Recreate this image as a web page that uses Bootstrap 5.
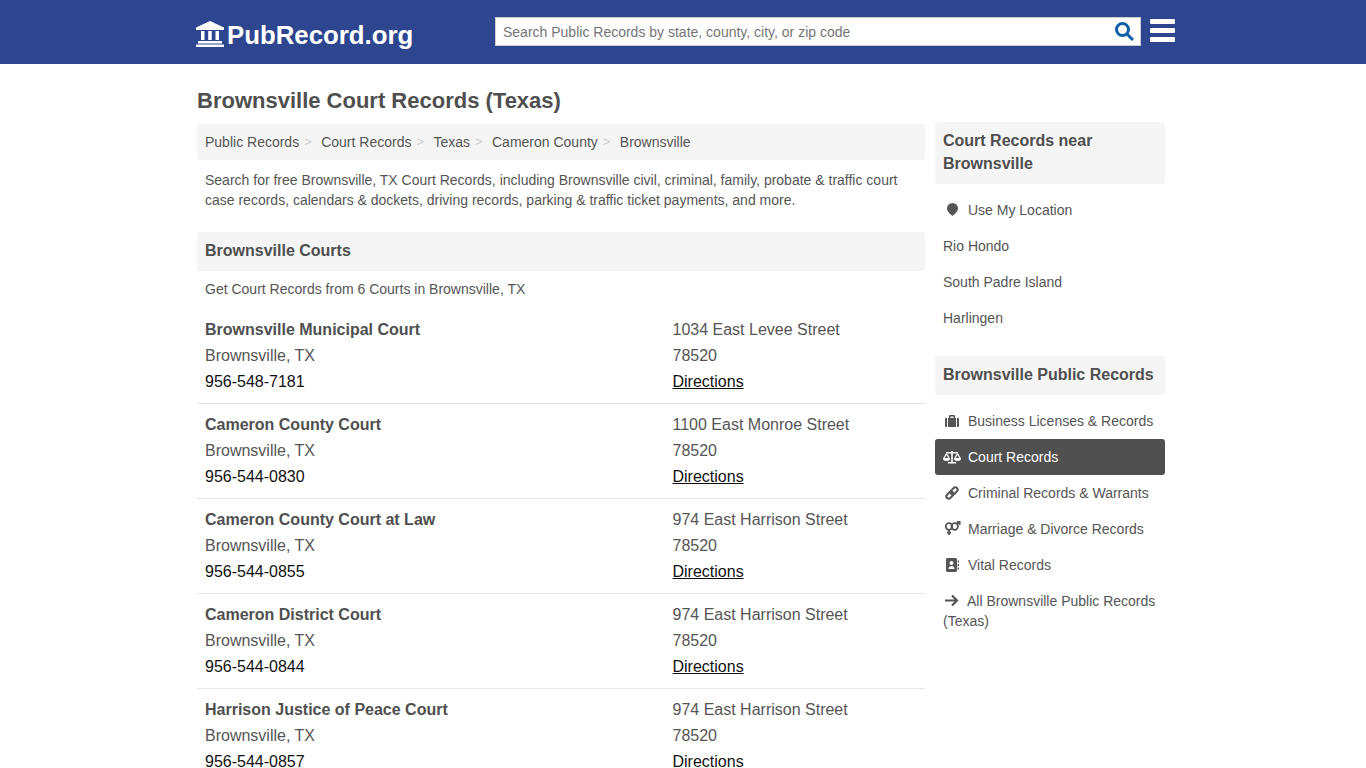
<!DOCTYPE html>
<html lang="en">
<head>
<meta charset="UTF-8">
<meta name="viewport" content="width=device-width, initial-scale=1.0">
<title>Brownsville Court Records (Texas)</title>
<link href="https://cdn.jsdelivr.net/npm/bootstrap@5.3.0/dist/css/bootstrap.min.css" rel="stylesheet">
<style>
body { font-family: "Liberation Sans", Arial, sans-serif; color: #555; font-size: 14px; height: 768px; overflow: hidden; background: #fff; }
a { color: inherit; text-decoration: none; }
.site-bar { background: #2e4690; height: 64px; }
.site-wrap { width: 1000px; margin: 0 auto; }
.brand-name { font-size: 25.8px; font-weight: 700; color: #fff; line-height: 1; margin-left: 3px; margin-top: 4px; }
.brand-box { width: 312px; padding-left: 13px; padding-top: 3px; }
.brand-box svg { margin-top: 2px; }
.search-box { width: 646px; height: 29px; background: #fff; border: 1px solid #ccc; margin-bottom: 1px; }
.search-box input { border: 0; outline: 0; flex: 1; min-width: 0; font: 14px "Liberation Sans", Arial, sans-serif; padding: 0 7px; color: #333; }
.search-box input::placeholder { color: #757575; opacity: 1; }
.search-icon { margin-right: 6px; }
.menu-icon { margin-left: 9px; margin-bottom: 3px; }
.main-col { width: 728px; margin-left: 14px; }
.side-col { width: 230px; margin-left: 10px; margin-top: -2px; }
.page-title { font-size: 22px; font-weight: 700; margin: 25px 0 0 14px; line-height: 24px; height: 35px; color: #4f4f4f; }
.crumbs { background: #f5f5f5; height: 36px; border-radius: 3px; padding: 0 8px; gap: 22px; }
.crumb-item { position: relative; }
.crumb-item + .crumb-item::before { content: ">"; position: absolute; left: -17px; color: #ccc; font-size: 13px; }
.intro { padding: 10px 8px 0; line-height: 20px; height: 72px; margin: 0; }
.sec-head { background: #f5f5f5; border-radius: 3px; font-size: 16px; font-weight: 700; padding: 0 8px; margin: 0; line-height: 37px; height: 39px; color: #4f4f4f; }
.sec-sub { padding: 0 8px; margin: 0; height: 38px; line-height: 36px; }
.court-row { padding: 8px 8px 6px; border-bottom: 1px solid #e5e5e5; font-size: 16px; line-height: 26px; height: 95px; }
.court-row:last-child { border-bottom: 0; }
.court-left { width: 467.5px; }
.court-name { font-weight: 700; color: #4f4f4f; }
.court-tel { color: #111; }
.court-dir { color: #111; text-decoration: underline; }
.side-head { background: #f5f5f5; border-radius: 3px; font-size: 16px; font-weight: 700; padding: 7px 8px 9px; line-height: 23px; margin: 0; color: #4f4f4f; }
.side-list { padding: 8px 0 20px; margin: 0; }
.side-link { display: flex; align-items: center; height: 36px; padding: 0 8px; border-radius: 3px; }
.side-link svg { width: 18px; height: 18px; margin-right: 7px; fill: currentColor; flex: none; }
.side-link.is-on { background: #505050; color: #fff; }
.side-wrap { display: block; height: auto; padding: 8px 8px; line-height: 20px; }
.side-wrap svg { vertical-align: -4px; margin-right: 6px; }
</style>
</head>
<body>
<div class="site-bar">
  <div class="site-wrap d-flex align-items-center h-100">
    <div class="brand-box d-flex align-items-center">
      <svg width="28" height="26" viewBox="0 0 28 26" fill="#fff"><path d="M14 0 28 6.500V9H0V6.500zM5 10h3.500v9H5zM12.200 10h3.500v9h-3.500zM19.500 10H23v9h-3.500zM2 20h24v2.500H2zM0 23.500h28V26H0z"/></svg>
      <span class="brand-name">PubRecord.org</span>
    </div>
    <div class="search-box d-flex align-items-center">
      <input type="text" placeholder="Search Public Records by state, county, city, or zip code">
      <svg class="search-icon" width="19" height="19" viewBox="0 0 19 19" fill="none" stroke="#0f5fa8" stroke-width="3"><circle cx="7.500" cy="7.500" r="6"/><path d="m12 12 6 6"/></svg>
    </div>
    <svg class="menu-icon" width="25" height="23" viewBox="0 0 25 23" fill="#fff"><rect width="25" height="5" rx="1"/><rect y="9" width="25" height="5" rx="1"/><rect y="18" width="25" height="5" rx="1"/></svg>
  </div>
</div>
<div class="site-wrap">
  <h1 class="page-title">Brownsville Court Records (Texas)</h1>
  <div class="d-flex">
    <div class="main-col">
      <div class="crumbs d-flex align-items-center">
        <a class="crumb-item" href="#">Public Records</a>
        <a class="crumb-item" href="#">Court Records</a>
        <a class="crumb-item" href="#">Texas</a>
        <a class="crumb-item" href="#">Cameron County</a>
        <a class="crumb-item" href="#">Brownsville</a>
      </div>
      <p class="intro">Search for free Brownsville, TX Court Records, including Brownsville civil, criminal, family, probate &amp; traffic court case records, calendars &amp; dockets, driving records, parking &amp; traffic ticket payments, and more.</p>
      <h2 class="sec-head">Brownsville Courts</h2>
      <p class="sec-sub">Get Court Records from 6 Courts in Brownsville, TX</p>
      <div>
        <div class="court-row d-flex">
          <div class="court-left"><div class="court-name">Brownsville Municipal Court</div><div>Brownsville, TX</div><div class="court-tel">956-548-7181</div></div>
          <div><div>1034 East Levee Street</div><div>78520</div><a class="court-dir" href="#">Directions</a></div>
        </div>
        <div class="court-row d-flex">
          <div class="court-left"><div class="court-name">Cameron County Court</div><div>Brownsville, TX</div><div class="court-tel">956-544-0830</div></div>
          <div><div>1100 East Monroe Street</div><div>78520</div><a class="court-dir" href="#">Directions</a></div>
        </div>
        <div class="court-row d-flex">
          <div class="court-left"><div class="court-name">Cameron County Court at Law</div><div>Brownsville, TX</div><div class="court-tel">956-544-0855</div></div>
          <div><div>974 East Harrison Street</div><div>78520</div><a class="court-dir" href="#">Directions</a></div>
        </div>
        <div class="court-row d-flex">
          <div class="court-left"><div class="court-name">Cameron District Court</div><div>Brownsville, TX</div><div class="court-tel">956-544-0844</div></div>
          <div><div>974 East Harrison Street</div><div>78520</div><a class="court-dir" href="#">Directions</a></div>
        </div>
        <div class="court-row d-flex">
          <div class="court-left"><div class="court-name">Harrison Justice of Peace Court</div><div>Brownsville, TX</div><div class="court-tel">956-544-0857</div></div>
          <div><div>974 East Harrison Street</div><div>78520</div><a class="court-dir" href="#">Directions</a></div>
        </div>
      </div>
    </div>
    <div class="side-col">
      <h3 class="side-head">Court Records near Brownsville</h3>
      <div class="side-list">
        <a class="side-link" href="#"><svg viewBox="0 0 18 18"><path d="M9.500 2A5.500 5.500 0 0 1 15 7.500c0 3-3.500 6-5.500 7.500C7.500 13.500 4 10.500 4 7.500A5.500 5.500 0 0 1 9.500 2z"/></svg>Use My Location</a>
        <a class="side-link" href="#">Rio Hondo</a>
        <a class="side-link" href="#">South Padre Island</a>
        <a class="side-link" href="#">Harlingen</a>
      </div>
      <h3 class="side-head">Brownsville Public Records</h3>
      <div class="side-list">
        <a class="side-link" href="#"><svg viewBox="0 0 18 18"><path fill-rule="evenodd" d="M2 7a1 1 0 0 1 1-1h1v9H3a1 1 0 0 1-1-1zM14 6h1a1 1 0 0 1 1 1v7a1 1 0 0 1-1 1h-1zM5 6h1V4a1 1 0 0 1 1-1h4a1 1 0 0 1 1 1v2h1v9H5zM7.500 4.500V6h3V4.500z"/></svg>Business Licenses &amp; Records</a>
        <a class="side-link is-on" href="#"><svg viewBox="0 0 18 18"><path fill-rule="evenodd" d="M8.200 3h1.600v1h5.200v1.500H9.800V14H13v1.500H5V14h3.200V5.500H3V4h5.200zM3.500 4.500 7 10.500a3.500 2.500 0 0 1-7 0zM3.500 7 1.700 10h3.600zM14.500 4.500l3.500 6a3.500 2.500 0 0 1-7 0zM14.500 7l-1.800 3h3.600z"/></svg>Court Records</a>
        <a class="side-link" href="#"><svg viewBox="0 0 18 18"><g fill="none" stroke="currentColor" stroke-width="2" transform="rotate(-45 9 9)"><rect x="2" y="6.700" width="8" height="4.600" rx="2.300"/><rect x="8" y="6.700" width="8" height="4.600" rx="2.300"/></g></svg>Criminal Records &amp; Warrants</a>
        <a class="side-link" href="#"><svg viewBox="0 0 18 18"><g fill="none" stroke="currentColor" stroke-width="1.700"><circle cx="6" cy="6.500" r="3.300"/><circle cx="11.700" cy="6.500" r="3.300"/><path d="M6 10v5M4 12.700h4M14 4.200l2.500-2.300M13.700 1.900h3v3"/></g></svg>Marriage &amp; Divorce Records</a>
        <a class="side-link" href="#"><svg viewBox="0 0 18 18"><path fill-rule="evenodd" d="M4.500 2h8A1.500 1.500 0 0 1 14 3.500v11a1.500 1.500 0 0 1-1.500 1.500h-8A1.500 1.500 0 0 1 3 14.500v-11A1.500 1.500 0 0 1 4.500 2zM8.500 5a2 2 0 1 0 0 4 2 2 0 0 0 0-4zM5.500 13h6c0-1.800-1.200-3-3-3s-3 1.200-3 3zM14.700 4.500H16v2h-1.300zM14.700 8H16v2h-1.300zM14.700 11.500H16v2h-1.300z"/></svg>Vital Records</a>
        <a class="side-link side-wrap" href="#"><svg viewBox="0 0 18 18"><path fill="none" stroke="currentColor" stroke-width="2.200" d="M2 8.500h12M9 3.500l5 5-5 5"/></svg>All Brownsville Public Records (Texas)</a>
      </div>
    </div>
  </div>
</div>
<script src="https://cdn.jsdelivr.net/npm/bootstrap@5.3.0/dist/js/bootstrap.bundle.min.js"></script>
</body>
</html>
